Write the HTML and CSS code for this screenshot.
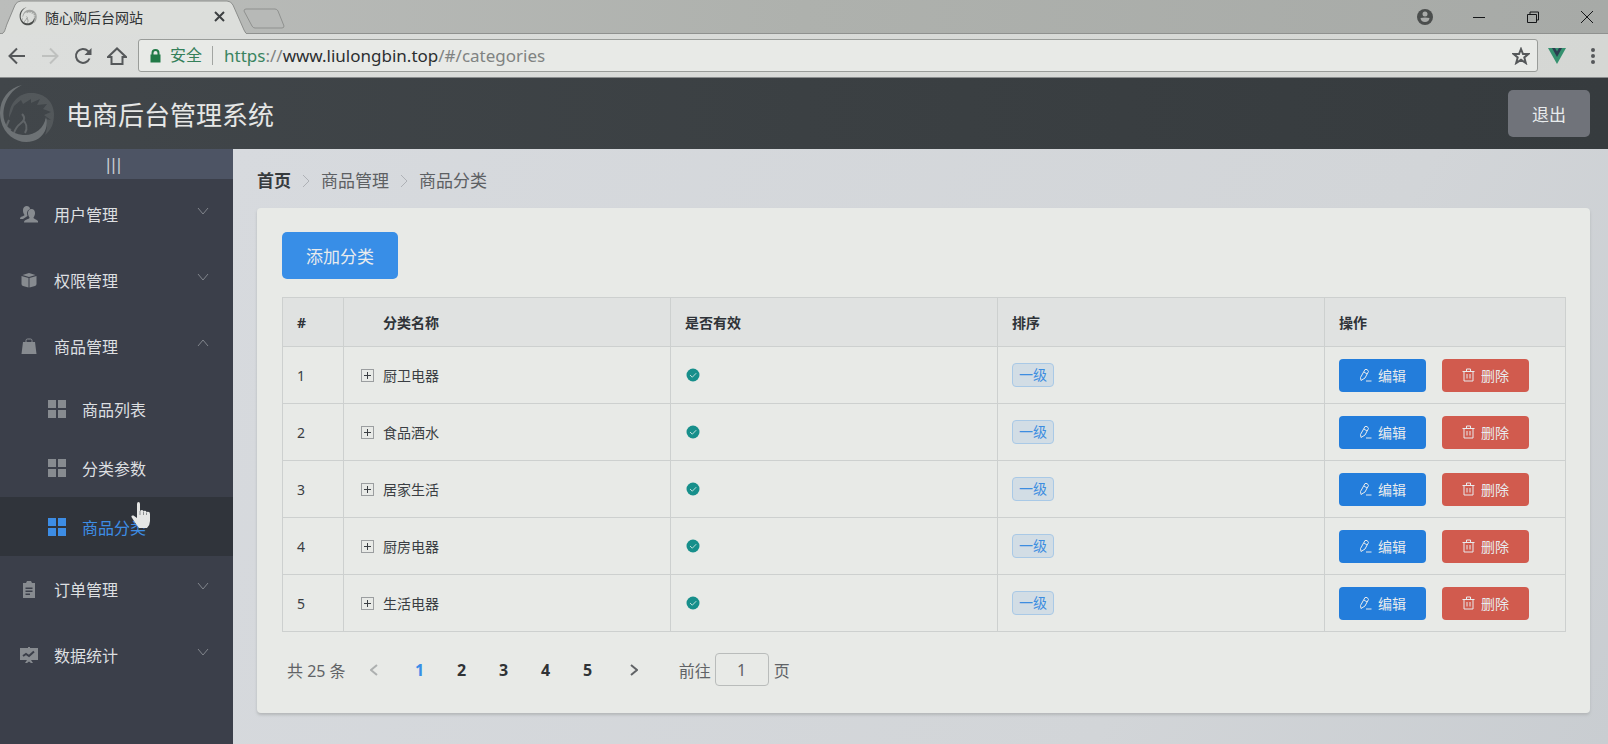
FILE: index.html
```
<!DOCTYPE html>
<html lang="zh-CN">
<head>
<meta charset="utf-8">
<title>随心购后台网站</title>
<link rel="stylesheet" href="styles.css">
</head>
<body>
<svg class="defs" aria-hidden="true">
  <symbol id="i-horse" viewBox="0 0 56 60">
    <path class="mane" d="M9 34C9 18 20 9 30 9C44 8 54 18 54 30C54 40 51 46 45 51C48 44 47 39 45 35L51 36L44 31L51 28L43 25L47 20L37 21L40 15L31 19L31 15L23 20L21 16L14 22Q12 28 9 34Z"/>
    <path class="ring" d="M22 1C5 5-3 21 1 37C5 53 20 61 33 57C43 54 49 44 46 33C44 45 34 52 23 51C9 50 1 38 4 24C6 14 12 6 22 1Z"/>
    <path class="neck" d="M22 30C26 34 24 37 20 40C16 43 15 46 14 49M23 36C26 39 28 44 25 49M9 36L6 43L11 46"/>
  </symbol>
  <symbol id="i-down" viewBox="0 0 12 12"><path class="line" d="M1 3L6 9L11 3"/></symbol>
  <symbol id="i-up" viewBox="0 0 12 12"><path class="line" d="M1 9L6 3L11 9"/></symbol>
  <symbol id="i-grid" viewBox="0 0 18 18"><path d="M0 0H8V8H0ZM10 0H18V8H10ZM0 10H8V18H0ZM10 10H18V18H10Z"/></symbol>
  <symbol id="i-edit" viewBox="0 0 13 14"><path class="line" d="M1.500 9.500L6 1.500Q8.500 0.500 9.500 3.500L6 10L2 12.500ZM5 4L8 6M7 13H12.500"/></symbol>
  <symbol id="i-trash" viewBox="0 0 13 14"><path class="line" d="M0.500 3.500H12.500M4.500 3V1H8.500V3M2 3.500V13H11V3.500M5 6V10.500M8 6V10.500"/></symbol>
  <symbol id="i-check" viewBox="0 0 14 14"><circle cx="7" cy="7" r="6.500"/><path class="tick" d="M4 7L6.300 9.200L10.200 5.200"/></symbol>
</svg>

<div class="tabs">
  <div class="tab">
    <svg class="tab-shape" viewBox="0 0 247 34" preserveAspectRatio="none" aria-hidden="true"><path d="M0 34C5 34 5 29 7 24L15 5Q17 1 21 1H227Q231 1 233 5L244 30Q246 34 247 34"/></svg>
    <svg class="favicon" aria-hidden="true"><use href="#i-horse"/></svg>
    <span class="tab-title">随心购后台网站</span>
    <button class="tab-close" aria-label="关闭标签页"><svg viewBox="0 0 11 11"><path class="line" d="M1 1L10 10M10 1L1 10"/></svg></button>
  </div>
  <button class="new-tab" aria-label="新标签页"><svg viewBox="0 0 42 21"><path d="M3 1H32Q34 1 35 3L41 18Q41 20 39 20H12Q10 20 9 18L1 3Q1 1 3 1Z"/></svg></button>
  <div class="window-controls">
    <button aria-label="用户"><svg viewBox="0 0 16 16"><circle class="dark" cx="8" cy="8" r="8"/><circle class="hole" cx="8" cy="5" r="2.500"/><path class="hole" d="M3.500 9Q8 8 12.500 9Q12 13 8 13Q4 13 3.500 9Z"/></svg></button>
    <button aria-label="最小化"><svg viewBox="0 0 16 16"><path class="line" d="M2 8.500H14"/></svg></button>
    <button aria-label="还原"><svg viewBox="0 0 16 16"><path class="line" d="M2.500 5.500H11.500V13.500H2.500ZM5 5V3H13.500V11H12"/></svg></button>
    <button aria-label="关闭"><svg viewBox="0 0 16 16"><path class="line thin" d="M2 2L14 14M14 2L2 14"/></svg></button>
  </div>
</div>

<div class="toolbar">
  <button class="nav" aria-label="后退"><svg viewBox="0 0 18 18"><path class="line" d="M17 9H2M9 1.500L1.500 9L9 16.500"/></svg></button>
  <button class="nav" aria-label="前进" disabled><svg viewBox="0 0 18 18"><path class="line" d="M1 9H16M9 1.500L16.500 9L9 16.500"/></svg></button>
  <button class="nav" aria-label="刷新"><svg viewBox="0 0 18 18"><path class="line" d="M15.500 11.500A7 7 0 1 1 14 4L16 6.500"/><path d="M17.500 1V8H10.500Z"/></svg></button>
  <button class="nav" aria-label="主页"><svg viewBox="0 0 20 18"><path class="line" d="M1 10L10 1.500L19 10H15.500V17H4.500V10Z"/></svg></button>
  <div class="address">
    <svg class="lock" viewBox="0 0 11 14" aria-hidden="true"><path d="M0.500 5.500H10.500V13.500H0.500Z"/><path class="line" d="M2.500 6V4A3 3 0 0 1 8.500 4V6"/></svg>
    <span class="secure">安全</span>
    <div class="url" role="textbox" aria-label="地址" contenteditable="true"><span class="scheme">https</span><span class="dim">://</span>www.liulongbin.top<span class="dim">/#/categories</span></div>
    <button class="star" aria-label="收藏"><svg viewBox="0 0 18 18"><path class="line" d="M9 2L11 7H16.500L12.300 10.400L13.800 16L9 12.800L4.200 16L5.700 10.400L1.500 7H7Z"/></svg></button>
  </div>
  <button class="ext" aria-label="Vue"><svg viewBox="0 0 18 16"><path class="vue-a" d="M0 0H18L9 16Z"/><path class="vue-b" d="M4 0H7L9 3.500L11 0H14L9 9Z"/></svg></button>
  <button class="more" aria-label="菜单"><svg viewBox="0 0 4 16"><circle cx="2" cy="2" r="2"/><circle cx="2" cy="8" r="2"/><circle cx="2" cy="14" r="2"/></svg></button>
</div>

<header class="header">
  <svg class="logo" aria-hidden="true"><use href="#i-horse"/></svg>
  <h1>电商后台管理系统</h1>
  <button class="btn logout">退出</button>
</header>

<div class="body">
  <nav class="side">
    <button class="toggle" aria-label="折叠菜单">|||</button>
    <ul>
      <li><button class="item" aria-expanded="false"><svg class="icon" viewBox="0 0 18 18"><path d="M0 14C0 11 4 11.500 4.500 10C3 8 3 6 3 5C3 0 10 0 10 4C7.500 5 6.500 7 7.500 11Q6 12 3 14Z"/><path d="M4 17.500C4 14 9.500 14.500 9.500 12.500C7 9 7.500 4 11.500 4C15.500 4 16 9 13.500 12.500C13.500 14.500 18 14 18.500 17.500Z"/></svg><span>用户管理</span><svg class="arrow"><use href="#i-down"/></svg></button></li>
      <li><button class="item" aria-expanded="false"><svg class="icon" viewBox="0 0 18 18"><path d="M9 2L15.500 4L9 6L2.500 4ZM1.500 5L8.500 7V16.500L3 15Q1.500 14.500 1.500 13ZM16.500 5L9.500 7V16.500L15 15Q16.500 14.500 16.500 13Z"/></svg><span>权限管理</span><svg class="arrow"><use href="#i-down"/></svg></button></li>
      <li><button class="item" aria-expanded="true"><svg class="icon" viewBox="0 0 18 18"><path d="M3 5H15L16.500 17H1.500Z"/><path class="line" d="M6 7V3.500Q6 2 7.500 2H10.500Q12 2 12 3.500V7"/></svg><span>商品管理</span><svg class="arrow"><use href="#i-up"/></svg></button>
        <ul>
          <li><a class="sub" href="#/goods"><svg class="icon"><use href="#i-grid"/></svg><span>商品列表</span></a></li>
          <li><a class="sub" href="#/params"><svg class="icon"><use href="#i-grid"/></svg><span>分类参数</span></a></li>
          <li><a class="sub active" href="#/categories"><svg class="icon"><use href="#i-grid"/></svg><span>商品分类</span></a>
            <svg class="pointer" viewBox="0 0 20 27" aria-hidden="true"><path d="M6 2Q6 0 7.500 0Q9 0 9 2V9Q11 7 12.500 9Q15 8 15.500 10Q19 9 19 12V19Q19 23 16 26H8Q5 22 3 19L0.500 15Q0 13 2.500 13.500L6 16Z"/><path class="finger" d="M9 9V13M12.500 9.500V13M15.500 10.500V13"/></svg></li>
        </ul></li>
      <li><button class="item" aria-expanded="false"><svg class="icon" viewBox="0 0 18 18"><path fill-rule="evenodd" d="M3 3H6L7 1H11L12 3H15V18H3ZM5.500 7.500V9H12.500V7.500ZM5.500 10.500V12H12.500V10.500ZM5.500 13.500V15H10V13.500Z"/></svg><span>订单管理</span><svg class="arrow"><use href="#i-down"/></svg></button></li>
      <li><button class="item" aria-expanded="false"><svg class="icon" viewBox="0 0 18 18"><path d="M0 2H8V1H10V2H18V14H0ZM7 14H11L13 17H11L9 15.500L7 17H5Z"/><path class="cut" d="M3 10L6 8L9 10L14 5.500"/></svg><span>数据统计</span><svg class="arrow"><use href="#i-down"/></svg></button></li>
    </ul>
  </nav>

  <main class="main">
    <nav class="crumbs" aria-label="面包屑">
      <a href="#/home">首页</a>
      <svg viewBox="0 0 8 14" aria-hidden="true"><path class="line" d="M1 1L7 7L1 13"/></svg>
      <span>商品管理</span>
      <svg viewBox="0 0 8 14" aria-hidden="true"><path class="line" d="M1 1L7 7L1 13"/></svg>
      <span>商品分类</span>
    </nav>
    <section class="card">
      <button class="btn add">添加分类</button>
      <table>
        <colgroup><col class="c-num"><col><col><col><col class="c-op"></colgroup>
        <thead><tr><th>#</th><th class="name-head">分类名称</th><th>是否有效</th><th>排序</th><th>操作</th></tr></thead>
        <tbody>
          <tr><td>1</td><td><div class="name"><button class="expand" aria-label="展开"><svg viewBox="0 0 11 11"><path class="line" d="M5.500 2V9M2 5.500H9"/></svg></button>厨卫电器</div></td><td><svg class="ok"><use href="#i-check"/></svg></td><td><span class="tag">一级</span></td><td><div class="ops"><button class="btn small edit"><svg><use href="#i-edit"/></svg>编辑</button><button class="btn small del"><svg><use href="#i-trash"/></svg>删除</button></div></td></tr>
          <tr><td>2</td><td><div class="name"><button class="expand" aria-label="展开"><svg viewBox="0 0 11 11"><path class="line" d="M5.500 2V9M2 5.500H9"/></svg></button>食品酒水</div></td><td><svg class="ok"><use href="#i-check"/></svg></td><td><span class="tag">一级</span></td><td><div class="ops"><button class="btn small edit"><svg><use href="#i-edit"/></svg>编辑</button><button class="btn small del"><svg><use href="#i-trash"/></svg>删除</button></div></td></tr>
          <tr><td>3</td><td><div class="name"><button class="expand" aria-label="展开"><svg viewBox="0 0 11 11"><path class="line" d="M5.500 2V9M2 5.500H9"/></svg></button>居家生活</div></td><td><svg class="ok"><use href="#i-check"/></svg></td><td><span class="tag">一级</span></td><td><div class="ops"><button class="btn small edit"><svg><use href="#i-edit"/></svg>编辑</button><button class="btn small del"><svg><use href="#i-trash"/></svg>删除</button></div></td></tr>
          <tr><td>4</td><td><div class="name"><button class="expand" aria-label="展开"><svg viewBox="0 0 11 11"><path class="line" d="M5.500 2V9M2 5.500H9"/></svg></button>厨房电器</div></td><td><svg class="ok"><use href="#i-check"/></svg></td><td><span class="tag">一级</span></td><td><div class="ops"><button class="btn small edit"><svg><use href="#i-edit"/></svg>编辑</button><button class="btn small del"><svg><use href="#i-trash"/></svg>删除</button></div></td></tr>
          <tr><td>5</td><td><div class="name"><button class="expand" aria-label="展开"><svg viewBox="0 0 11 11"><path class="line" d="M5.500 2V9M2 5.500H9"/></svg></button>生活电器</div></td><td><svg class="ok"><use href="#i-check"/></svg></td><td><span class="tag">一级</span></td><td><div class="ops"><button class="btn small edit"><svg><use href="#i-edit"/></svg>编辑</button><button class="btn small del"><svg><use href="#i-trash"/></svg>删除</button></div></td></tr>
        </tbody>
      </table>
      <div class="pager">
        <span class="total">共 25 条</span>
        <button class="step prev" aria-label="上一页" disabled><svg viewBox="0 0 8 12"><path class="line" d="M7 1L1 6L7 11"/></svg></button>
        <button class="page current">1</button><button class="page">2</button><button class="page">3</button><button class="page">4</button><button class="page">5</button>
        <button class="step next" aria-label="下一页"><svg viewBox="0 0 8 12"><path class="line" d="M1 1L7 6L1 11"/></svg></button>
        <label class="jump">前往<input type="text" value="1" aria-label="页码">页</label>
      </div>
    </section>
  </main>
</div>
</body>
</html>
```
FILE: styles.css
```
* { box-sizing: border-box; }
body {
  margin: 0;
  min-height: 100vh;
  display: flex;
  flex-direction: column;
  font-family: "Noto Sans", "Noto Sans CJK SC", sans-serif;
  font-size: 16px;
  color: #5d6063;
  background: #d4d7db;
}
button, input { font: inherit; color: inherit; }
button { padding: 0; border: 0; background: none; display: flex; align-items: center; justify-content: center; }
ul { list-style: none; margin: 0; padding: 0; }
a { color: inherit; text-decoration: none; }
svg { display: block; flex: none; fill: currentColor; }
.line { fill: none; stroke: currentColor; }
.defs { position: absolute; width: 0; height: 0; }

/* browser tabs */
.tabs {
  height: 34px;
  display: flex;
  align-items: center;
  background: linear-gradient(90deg, #bbbdbb, #aeb1ad 50%, #a7aaa7);
  border-bottom: 1px solid #8f918f;
}
.tab { position: relative; width: 247px; height: 34px; display: flex; align-items: center; padding: 0 20px 0 19px; color: #2e3133; }
.tab-shape { position: absolute; inset: 0; width: 100%; height: 100%; fill: #dcdedb; stroke: #8c8e8c; }
.favicon { position: relative; width: 19px; height: 19px; color: #4a4d4b; }
.tab-title { position: relative; margin-left: 7px; font-size: 14px; flex: 1; }
.tab-close { position: relative; width: 16px; height: 16px; color: #3d4042; }
.tab-close svg { width: 11px; height: 11px; stroke-width: 2; }
.new-tab svg { width: 42px; height: 21px; fill: #b7b9b7; stroke: #8f918f; }
.new-tab { margin-left: -4px; padding-top: 3px; }
.window-controls { margin-left: auto; display: flex; gap: 38px; padding-right: 13px; color: #151719; }
.window-controls svg { width: 16px; height: 16px; }
.window-controls .dark { fill: #4b4e4d; }
.window-controls .hole { fill: #a9aba9; }

/* browser toolbar */
.toolbar {
  height: 44px;
  display: flex;
  align-items: center;
  padding: 0 13px 0 8px;
  color: #55585a;
  background: linear-gradient(90deg, #dcdedc, #d5d7d4);
  border-bottom: 1px solid #8a8d8e;
}
.nav { width: 18px; height: 18px; margin-right: 15px; }
.nav:nth-child(4) { width: 20px; margin-right: 11px; }
.nav svg { width: 100%; height: 100%; stroke-width: 2; }
.nav:disabled { color: #bfc1bf; }
.address {
  flex: 1;
  height: 33px;
  display: flex;
  align-items: center;
  padding: 0 7px 0 11px;
  background: #e8eae7;
  border: 1px solid #999c99;
  border-radius: 3px;
}
.lock { width: 11px; height: 14px; color: #217a47; stroke-width: 2; }
.secure { margin-left: 9px; padding-right: 10px; border-right: 1px solid #a2a5a2; line-height: 19px; color: #35805a; }
.url { flex: 1; margin-left: 11px; font-size: 17px; color: #2c2f31; outline: 0; }
.scheme { color: #3a8460; }
.dim { color: #808382; }
.star svg { width: 18px; height: 18px; stroke-width: 2; }
.ext { margin-left: 10px; }
.ext svg { width: 18px; height: 16px; }
.vue-a { fill: #35916f; }
.vue-b { fill: #2c3d50; }
.more { margin-left: 25px; }
.more svg { width: 4px; height: 16px; }

/* page header */
.header {
  height: 71px;
  display: flex;
  align-items: center;
  padding-right: 18px;
  background: linear-gradient(90deg, #41464a, #3b4043 50%, #363b3e);
}
.logo { width: 56px; height: 60px; color: #6d7275; }
.mane { opacity: 0.4; }
.neck { fill: none; stroke: currentColor; stroke-width: 2; opacity: 0.7; }
h1 { margin: 0 auto 0 10px; font-size: 26px; font-weight: 400; color: #e6e7e6; }
.btn { height: 47px; padding: 0 24px; border-radius: 5px; color: #e8ebed; font-size: 17px; white-space: nowrap; }
.logout { background: #70737a; }

/* sidebar */
.body { flex: 1; display: flex; }
.side { flex: none; width: 233px; color: #dddfe1; background: #3b3f4a; }
.toggle { width: 100%; height: 30px; padding-right: 6px; margin-bottom: 2px; font-family: "DejaVu Sans", sans-serif; font-size: 16px; color: #c8ccd2; background: #4d5464; }
.item { width: 100%; height: 66px; padding: 0 24px 0 20px; justify-content: flex-start; }
.item span { flex: 1; margin-left: 16px; text-align: left; }
.icon { width: 18px; height: 18px; color: #878b90; }
.cut { fill: none; stroke: #3b3f4a; stroke-width: 2; }
.arrow { width: 12px; height: 12px; margin-bottom: 6px; color: #81858c; }
.side li { position: relative; }
.sub { height: 59px; display: flex; align-items: center; gap: 16px; padding-left: 48px; }
.active { color: #3d8de5; background: #30343b; }
.active .icon { color: #3d8de5; }
.pointer { position: absolute; left: 131px; top: 5px; width: 20px; height: 27px; fill: #e5e6e5; }
.finger { stroke: #8b8e90; }

/* content */
.main { flex: 1; min-width: 0; padding: 18px 18px 24px 24px; background: linear-gradient(120deg, #d7dade, #d2d5d8 70%, #c9cdd1); }
.crumbs { display: flex; align-items: center; gap: 11px; height: 28px; margin-bottom: 13px; font-size: 17px; line-height: 28px; }
.crumbs svg { width: 8px; height: 14px; color: #aeb1b6; }
.crumbs a { font-weight: 700; color: #373b3e; }
.card { padding: 24px 24px 27px 25px; border-radius: 4px; background: #e8eae7; box-shadow: 0 2px 3px #b4b7b9; }
.add { background: #388ee7; }
table { width: 100%; margin: 18px 0 21px; border-collapse: collapse; table-layout: fixed; font-size: 14px; color: #3a3e43; }
th, td { height: 57px; padding: 0 14px; border: 1px solid #cdd0cf; text-align: left; }
th { height: 49px; font-weight: 700; color: #2f3338; background: #e0e2e1; }
.c-num { width: 61px; }
.c-op { width: 241px; }
.name-head { padding-left: 39px; }
.name { display: flex; align-items: center; gap: 9px; padding-left: 3px; }
.expand { width: 13px; height: 13px; border: 1px solid #9b9ea0; }
.expand svg { width: 11px; height: 11px; }
.ok { width: 14px; height: 14px; margin-left: 1px; color: #178f8b; }
.tick { fill: none; stroke: #bfe0dc; }
.tag { display: inline-block; height: 24px; padding: 0 6px; border: 1px solid #a9c9e6; border-radius: 4px; line-height: 22px; color: #3d8de0; background: #d2dde5; }
.ops { display: flex; gap: 16px; }
.small { width: 87px; height: 33px; padding: 0; gap: 6px; border-radius: 4px; font-size: 14px; }
.small svg { width: 13px; height: 14px; }
.edit { background: #237ddb; }
.del { background: #d15b4e; }

/* pagination */
.pager { display: flex; align-items: center; padding-left: 5px; color: #606366; }
.step { width: 42px; height: 33px; }
.step svg { width: 8px; height: 12px; stroke-width: 2; }
.step:disabled { color: #adb0b0; }
.prev { margin: 0 4px 0 7px; }
.next { margin-left: 4px; }
.page { width: 42px; height: 33px; font-weight: 700; color: #303336; }
.current { color: #388ee7; }
.jump { display: flex; align-items: center; margin-left: 24px; }
.jump input { width: 54px; height: 33px; margin: 0 5px 0 4px; padding: 0; border: 1px solid #b9bcbb; border-radius: 4px; text-align: center; background: #e8eae7; }
```
